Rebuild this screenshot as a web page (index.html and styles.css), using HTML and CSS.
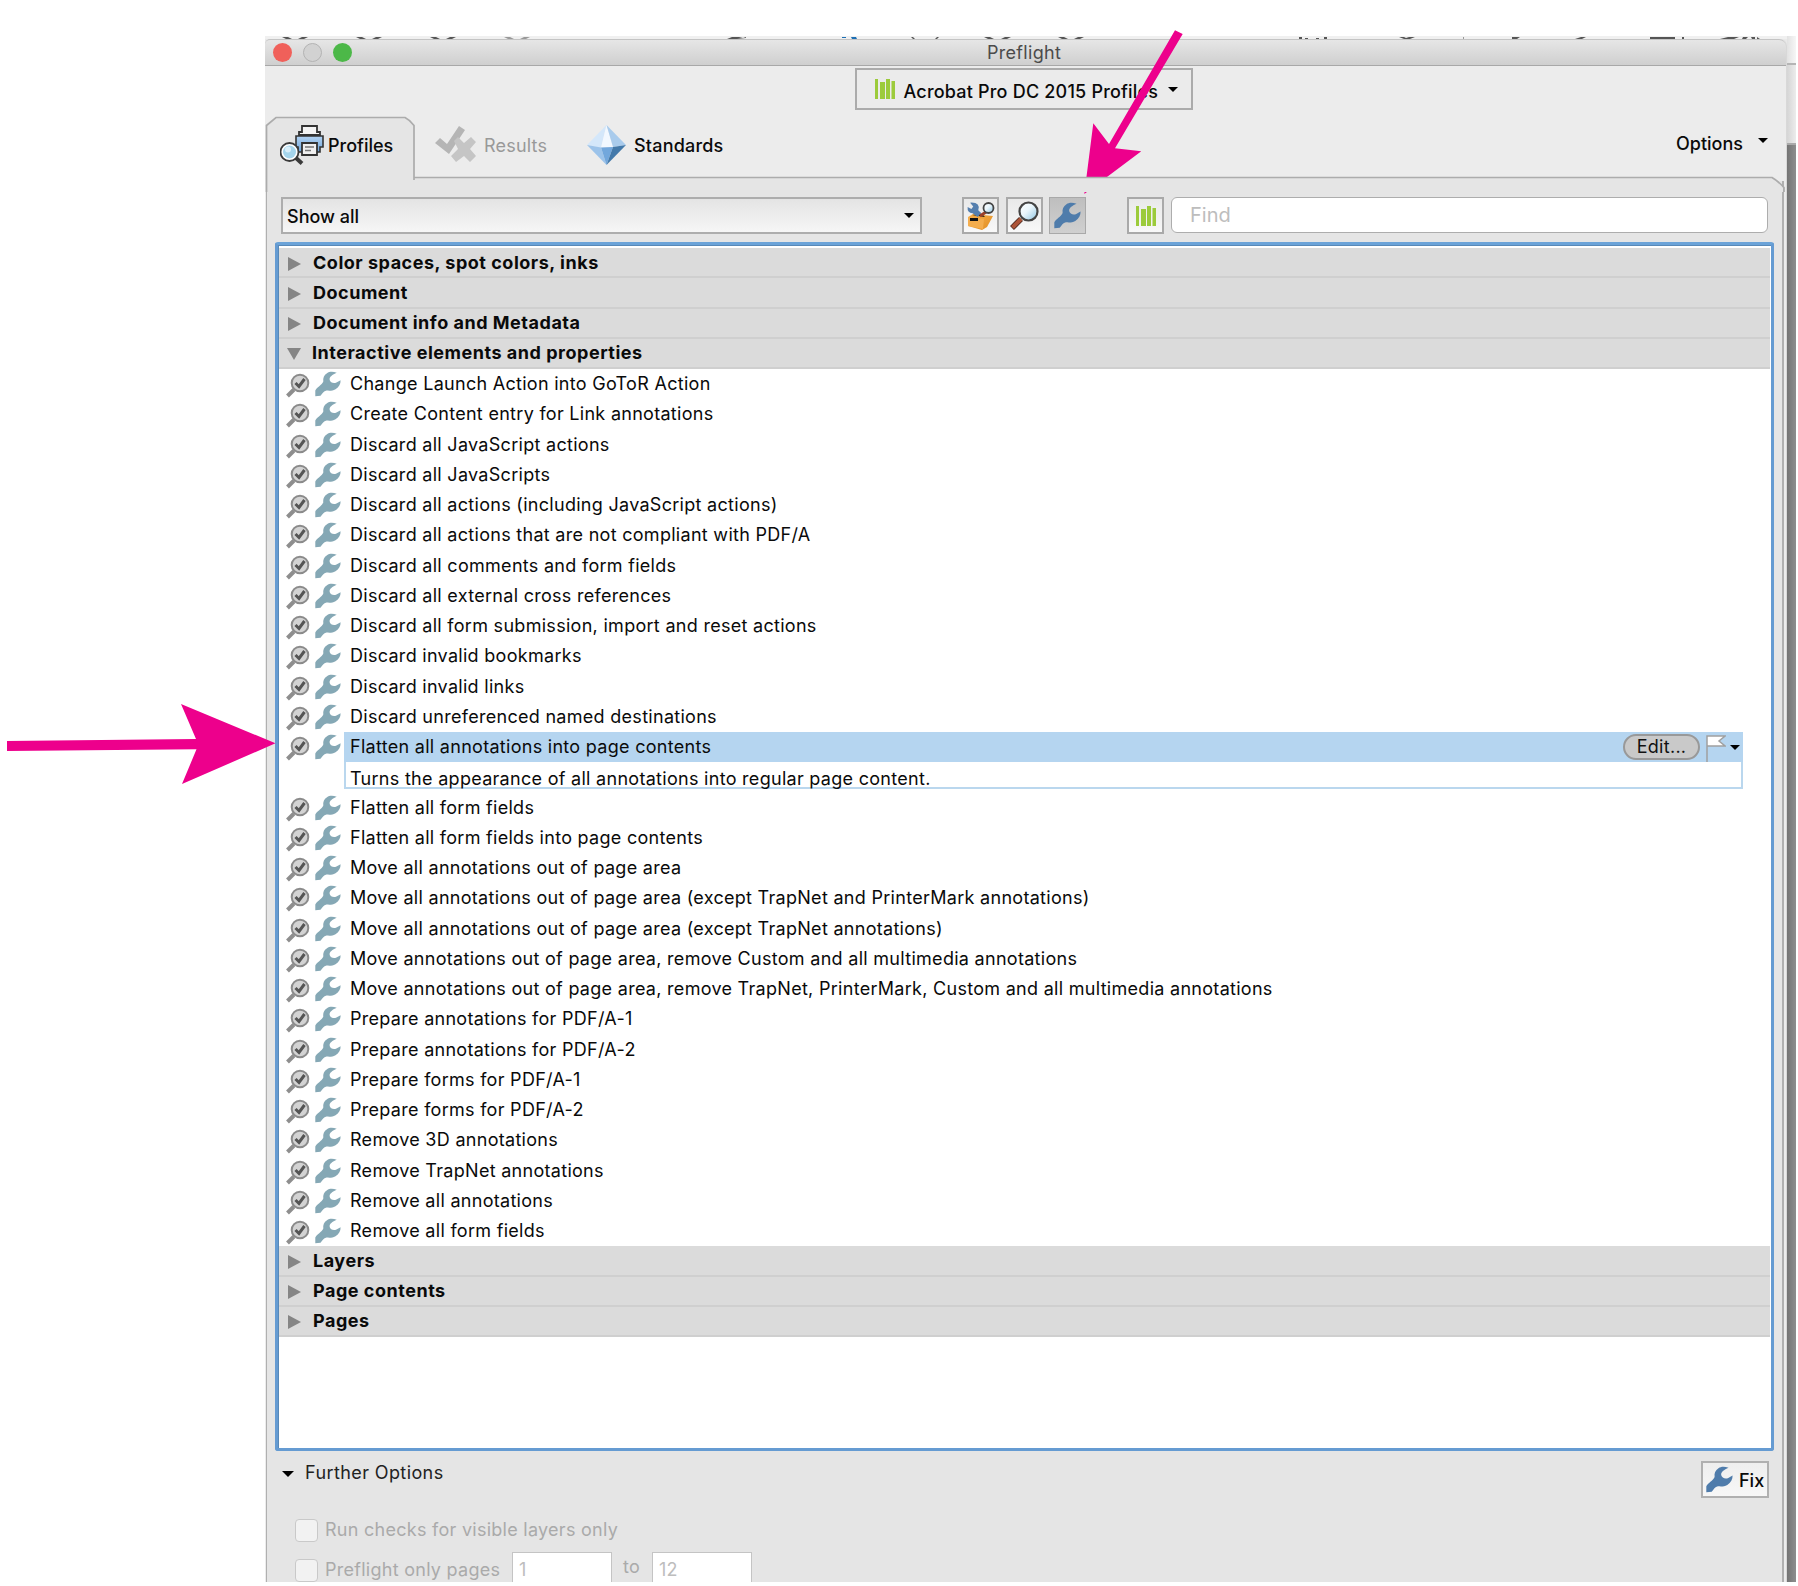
FILE: index.html
```html
<!DOCTYPE html>
<html lang="en">
<head>
<meta charset="utf-8">
<title>Preflight</title>
<link rel="stylesheet" href="styles.css">
</head>
<body>
<svg class="defs" aria-hidden="true">
  <defs>
    <symbol id="wrench" viewBox="0 0 26 26">
      <path d="M21.700 1.800 C18 .3 14.500 .3 12 2.200 C9 4 7.800 7 8.300 10.500 C7 14 1.500 16.500 .3 19.500 L.3 25.300 L5.500 24.800 C7.500 22.500 8.500 20.300 11.500 19.600 C14.500 19.800 17.500 20 20.500 18.200 C24 16 25.700 13 25.600 9.200 L21 11.800 C18 12.600 15.300 11.500 14.700 9 C14 6 17.500 3.700 21.700 1.800 Z"/>
    </symbol>
    <symbol id="loupe" viewBox="0 0 24 24">
      <path d="M1.500 22.500 L8 16" stroke="#8e8e8e" stroke-width="4"/>
      <circle cx="14" cy="9.500" r="8.300" fill="#d3d3d3" stroke="#8b8b8b" stroke-width="2"/>
      <path d="M9.500 9.500 L13 13 L18.500 5.500" fill="none" stroke="#555" stroke-width="3"/>
    </symbol>
    <symbol id="bars" viewBox="0 0 20 20">
      <path d="M0 0h3v20h-3zM5 3h5v17h-5zM11 0h4v20h-4zM16.500 2h3.500v18h-3.500z" fill="#9ccb3b"/>
    </symbol>
    <linearGradient id="lens" x1="0" y1="0" x2="1" y2="1"><stop offset="0" stop-color="#fff"/><stop offset=".45" stop-color="#eaf6fc"/><stop offset="1" stop-color="#8cc4e2"/></linearGradient>
    <linearGradient id="box" x1="0" y1="0" x2="1" y2="1"><stop offset="0" stop-color="#f8b04a"/><stop offset="1" stop-color="#e08d22"/></linearGradient>
    <linearGradient id="blue" x1="0" y1="0" x2="0" y2="1"><stop offset="0" stop-color="#b3d3f3"/><stop offset="1" stop-color="#6fa5da"/></linearGradient>
  </defs>
</svg>

<div class="desktop">
  <div class="main">
    <svg class="remnant" width="1522" height="3" viewBox="0 0 1522 3">
      <path d="M17 1h6l4 2h-6zM43 1h-6l-4 2h6zM91 1h6l4 2h-6zM117 1h-6l-4 2h6zM165 1h6l4 2h-6zM191 1h-6l-4 2h6zM462 3l5-2h7l4 1l3-1v1l-9 1h-10zM646 1h2l2 2h-2zM674 1h-2l-2 2h2zM719 1h6l4 2h-6zM746 1h-6l-4 2h6zM793 1h6l4 2h-6zM819 1h-6l-4 2h6zM1034 1h3v2h-3zM1059 1h3v2h-3zM1040 2h3v1h-3zM1051 2h3v1h-3zM1134 1h5l2 1l3-1h6l-5 2h-6zM1247 1h8l-3 2h-5zM1310 3l6-2h5l-4 2h-7zM1385 1h25v2h-25zM1417 1h2v2h-2zM1455 3l8-2h11l-5 2zM1478 1h5l-2 2h-4zM1486 1h4v2h-3zM1492 1l3 2h-3z" fill="#555"/>
      <path d="M239 1h6l4 2h-6zM265 1h-6l-4 2h6zM1198 1h1v2h-1z" fill="#999"/>
      <path d="M577 1h4v1h-4zM586 1h5l1 2h-5z" fill="#1d6fb4"/>
    </svg>
    <div class="window">
      <header class="titlebar">
        <span class="light red"></span><span class="light idle"></span><span class="light green"></span>
        <span class="title">Preflight</span>
      </header>
      <div class="library-row">
        <div class="library">
          <svg width="20" height="20"><use href="#bars"/></svg>
          <span class="library-name">Acrobat Pro DC 2015 Profiles</span>
          <i class="caret"></i>
        </div>
      </div>
      <nav class="tabs">
        <svg class="tab-shape" width="1522" height="76" viewBox="0 0 1522 76">
          <path d="M2 76V10Q8 5 11 1.500H140Q145 4 149 10V61.500H1507Q1513 65 1518 71.500V76Z" fill="#e5e5e5"/>
          <path d="M1.500 76V9.500Q8 4 11 1.500H140Q145 4 149 9.500V64M149 61.500H1507Q1513 65 1519 71.500V76" fill="none" stroke="#acacac" stroke-width="1.700"/>
        </svg>
        <div class="tab profiles">
          <svg width="44" height="40" viewBox="0 0 44 40">
            <path d="M16 11h27v11h-3v5h-22v-5h-2z" fill="url(#blue)" stroke="#333" stroke-width="1.600"/>
            <path d="M22 1h15v6h3v3h-21v-3h3z" fill="#f4f4f4" stroke="#333" stroke-width="1.800"/>
            <path d="M22 18h15v12h-15z" fill="#f0f0f0" stroke="#333" stroke-width="1.800"/>
            <path d="M25 22h9M25 25.500h6" stroke="#777" stroke-width="1.300"/>
            <path d="M16 33l6 5.500" stroke="#3a3a3a" stroke-width="4"/>
            <circle cx="9.500" cy="27" r="9" fill="#fff" stroke="#3a3a3a" stroke-width="1.800"/>
            <circle cx="9.500" cy="27" r="6.500" fill="#a5d5ec"/><circle cx="8" cy="24.500" r="3" fill="#d9effa"/>
          </svg>
          <span>Profiles</span>
        </div>
        <div class="tab results">
          <svg width="42" height="40" viewBox="0 0 42 40">
            <path d="M0 18l5-5 7 6L24 1l6 4L14 29z" fill="#b5b5b5"/>
            <path d="M19 16l4-4 6 6 7-6 5 5-6 7 6 7-6 6-6-6-8 6-5-6 7-7z" fill="#c5c5c5"/>
          </svg>
          <span>Results</span>
        </div>
        <div class="tab standards">
          <svg width="41" height="40" viewBox="0 0 41 40">
            <path d="M20.500 0L1 20l14 3z" fill="#d4e7fa"/><path d="M20.500 0L15 23l12-1z" fill="#f2f8ff"/><path d="M20.500 0L27 22l13-2z" fill="#a9cbec"/>
            <path d="M1 20l14 2.500L20.500 40z" fill="#9cc3ea"/><path d="M15 22.500l12-.5-6.500 18z" fill="#72a7dc"/><path d="M27 22l13-2-19.500 20z" fill="#4379aa"/>
          </svg>
          <span>Standards</span>
        </div>
        <div class="options"><span>Options</span><i class="caret"></i></div>
      </nav>

      <section class="panel">
        <div class="toolbar">
          <div class="select"><span>Show all</span><i class="caret"></i></div>
          <div class="tool first">
            <svg width="29" height="29" viewBox="0 0 29 29">
              <path d="M2 16l5-3 20 2-6 11-5 3-14-4z" fill="url(#box)"/><path d="M2 16l16 2-1 10-15-3z" fill="#f4ad4d"/>
              <path d="M4 17h8v3H4zM6 14l10-1 3 3" fill="#111"/>
              <svg x="1" y="1" width="15" height="15" viewBox="0 0 24 24"><path d="M5 1L10 7L7 11L1 8Q0 17 9 18L17 24L23 18L18 13Q22 0 5 1Z" fill="#557fae"/></svg>
              <path d="M20 11l-6 4" stroke="#9b3f28" stroke-width="3"/><circle cx="22.500" cy="7" r="5" fill="url(#lens)" stroke="#444" stroke-width="1.800"/>
            </svg>
          </div>
          <div class="tool">
            <svg width="29" height="29" viewBox="0 0 29 29">
              <path d="M2 27l9-9" stroke="#4b2921" stroke-width="5.500"/><path d="M2.500 26.500l8.500-8.500" stroke="#ad5438" stroke-width="4"/>
              <circle cx="18.500" cy="10.500" r="9" fill="url(#lens)" stroke="#444" stroke-width="2.200"/>
            </svg>
          </div>
          <div class="tool pressed"><svg class="wrench-blue" width="27" height="27"><use href="#wrench"/></svg></div>
          <div class="tool library-tool"><svg width="20" height="20"><use href="#bars"/></svg></div>
          <div class="find">Find</div>
        </div>

        <div class="list">
          <div class="group"><i class="closed"></i>Color spaces, spot colors, inks</div>
          <div class="group"><i class="closed"></i>Document</div>
          <div class="group"><i class="closed"></i>Document info and Metadata</div>
          <div class="group"><i class="open"></i>Interactive elements and properties</div>
          <div class="item"><svg class="lp"><use href="#loupe"/></svg><svg class="wr"><use href="#wrench"/></svg><span>Change Launch Action into GoToR Action</span></div>
          <div class="item"><svg class="lp"><use href="#loupe"/></svg><svg class="wr"><use href="#wrench"/></svg><span>Create Content entry for Link annotations</span></div>
          <div class="item"><svg class="lp"><use href="#loupe"/></svg><svg class="wr"><use href="#wrench"/></svg><span>Discard all JavaScript actions</span></div>
          <div class="item"><svg class="lp"><use href="#loupe"/></svg><svg class="wr"><use href="#wrench"/></svg><span>Discard all JavaScripts</span></div>
          <div class="item"><svg class="lp"><use href="#loupe"/></svg><svg class="wr"><use href="#wrench"/></svg><span>Discard all actions (including JavaScript actions)</span></div>
          <div class="item"><svg class="lp"><use href="#loupe"/></svg><svg class="wr"><use href="#wrench"/></svg><span>Discard all actions that are not compliant with PDF/A</span></div>
          <div class="item"><svg class="lp"><use href="#loupe"/></svg><svg class="wr"><use href="#wrench"/></svg><span>Discard all comments and form fields</span></div>
          <div class="item"><svg class="lp"><use href="#loupe"/></svg><svg class="wr"><use href="#wrench"/></svg><span>Discard all external cross references</span></div>
          <div class="item"><svg class="lp"><use href="#loupe"/></svg><svg class="wr"><use href="#wrench"/></svg><span>Discard all form submission, import and reset actions</span></div>
          <div class="item"><svg class="lp"><use href="#loupe"/></svg><svg class="wr"><use href="#wrench"/></svg><span>Discard invalid bookmarks</span></div>
          <div class="item"><svg class="lp"><use href="#loupe"/></svg><svg class="wr"><use href="#wrench"/></svg><span>Discard invalid links</span></div>
          <div class="item"><svg class="lp"><use href="#loupe"/></svg><svg class="wr"><use href="#wrench"/></svg><span>Discard unreferenced named destinations</span></div>
          <div class="item selected"><svg class="lp"><use href="#loupe"/></svg><svg class="wr"><use href="#wrench"/></svg>
            <div class="detail">
              <div class="detail-head">
                <span>Flatten all annotations into page contents</span>
                <button class="edit">Edit...</button>
                <svg width="20" height="27" viewBox="0 0 20 27"><path d="M1 27V1H19L13 6L19 11H1" fill="#fff" stroke="#a0a0a0" stroke-width="1.500"/></svg>
                <i class="caret"></i>
              </div>
              <div class="detail-body">Turns the appearance of all annotations into regular page content.</div>
            </div>
          </div>
          <div class="item"><svg class="lp"><use href="#loupe"/></svg><svg class="wr"><use href="#wrench"/></svg><span>Flatten all form fields</span></div>
          <div class="item"><svg class="lp"><use href="#loupe"/></svg><svg class="wr"><use href="#wrench"/></svg><span>Flatten all form fields into page contents</span></div>
          <div class="item"><svg class="lp"><use href="#loupe"/></svg><svg class="wr"><use href="#wrench"/></svg><span>Move all annotations out of page area</span></div>
          <div class="item"><svg class="lp"><use href="#loupe"/></svg><svg class="wr"><use href="#wrench"/></svg><span>Move all annotations out of page area (except TrapNet and PrinterMark annotations)</span></div>
          <div class="item"><svg class="lp"><use href="#loupe"/></svg><svg class="wr"><use href="#wrench"/></svg><span>Move all annotations out of page area (except TrapNet annotations)</span></div>
          <div class="item"><svg class="lp"><use href="#loupe"/></svg><svg class="wr"><use href="#wrench"/></svg><span>Move annotations out of page area, remove Custom and all multimedia annotations</span></div>
          <div class="item"><svg class="lp"><use href="#loupe"/></svg><svg class="wr"><use href="#wrench"/></svg><span>Move annotations out of page area, remove TrapNet, PrinterMark, Custom and all multimedia annotations</span></div>
          <div class="item"><svg class="lp"><use href="#loupe"/></svg><svg class="wr"><use href="#wrench"/></svg><span>Prepare annotations for PDF/A-1</span></div>
          <div class="item"><svg class="lp"><use href="#loupe"/></svg><svg class="wr"><use href="#wrench"/></svg><span>Prepare annotations for PDF/A-2</span></div>
          <div class="item"><svg class="lp"><use href="#loupe"/></svg><svg class="wr"><use href="#wrench"/></svg><span>Prepare forms for PDF/A-1</span></div>
          <div class="item"><svg class="lp"><use href="#loupe"/></svg><svg class="wr"><use href="#wrench"/></svg><span>Prepare forms for PDF/A-2</span></div>
          <div class="item"><svg class="lp"><use href="#loupe"/></svg><svg class="wr"><use href="#wrench"/></svg><span>Remove 3D annotations</span></div>
          <div class="item"><svg class="lp"><use href="#loupe"/></svg><svg class="wr"><use href="#wrench"/></svg><span>Remove TrapNet annotations</span></div>
          <div class="item"><svg class="lp"><use href="#loupe"/></svg><svg class="wr"><use href="#wrench"/></svg><span>Remove all annotations</span></div>
          <div class="item"><svg class="lp"><use href="#loupe"/></svg><svg class="wr"><use href="#wrench"/></svg><span>Remove all form fields</span></div>
          <div class="group"><i class="closed"></i>Layers</div>
          <div class="group"><i class="closed"></i>Page contents</div>
          <div class="group"><i class="closed"></i>Pages</div>
        </div>

        <footer class="footer">
          <div class="further">
            <div class="further-head"><i class="caret"></i><span>Further Options</span></div>
            <div class="check"><i class="checkbox"></i><span>Run checks for visible layers only</span></div>
            <div class="check pages"><i class="checkbox"></i><span class="pages-label">Preflight only pages</span><div class="num">1</div><span class="to">to</span><div class="num">12</div></div>
          </div>
          <div class="fix"><svg class="wrench-blue" width="27" height="27"><use href="#wrench"/></svg><span>Fix</span></div>
        </footer>
      </section>
    </div>
  </div>
  <div class="behind"><div class="behind-bar"></div><div class="behind-pane"></div><div class="behind-canvas"></div></div>
</div>

<svg class="pointers" width="1798" height="1586" viewBox="0 0 1798 1586">
  <path d="M7 741L196 739L181 704L275.500 743.300L182 784L196.500 749.300L7 751Z"/>
  <path d="M1175 30.300L1182.700 34L1115 148.300L1141.300 151.300L1084.300 194L1093.300 123.300L1109 144Z"/>
</svg>
</body>
</html>
```
FILE: styles.css
```css
* { box-sizing: border-box; }
body {
  margin: 0;
  width: 1798px;
  height: 1586px;
  overflow: hidden;
  position: relative;
  background: #fff;
  color: #0a0a0a;
  font: 500 18px/22px Inter, "Liberation Sans", sans-serif;
}
svg { display: block; flex: none; }
.defs { position: absolute; width: 0; height: 0; }
.desktop { display: flex; padding: 36px 2px 4px 265px; height: 1586px; }
.main { width: 1522px; height: 1546px; display: flex; flex-direction: column; background: #e9e9e9; overflow: hidden; }
.remnant { background: #f0f0f0; }
.window { flex: 1; min-height: 0; display: flex; flex-direction: column; background: #ececec; border-right: 1px solid #d8d8d8; border-radius: 5px 7px 0 0; }
.titlebar { height: 27px; display: flex; align-items: center; padding-left: 8px; gap: 11px; background: linear-gradient(#e6e6e6, #cfcfcf); border-top: 1px solid #c4c4c4; border-bottom: 1px solid #a8a8a8; border-radius: 5px 7px 0 0; }
.light { width: 19px; height: 19px; border-radius: 50%; }
.red { background: #f0605a; }
.idle { background: #d2d2d2; border: 1px solid #b3b3b3; }
.green { background: #4cb848; }
.title { margin-left: 624px; color: #4b4b4b; font-weight: 400; letter-spacing: .3px; }
.library-row { height: 50px; padding-top: 2px; display: flex; justify-content: center; }
.library { width: 338px; height: 42px; margin-right: 4px; border: 2px solid #ababab; display: flex; align-items: center; padding-left: 18px; background: #ebebeb; }
.library-name { width: 256px; margin: 5px 8px 0 9px; white-space: nowrap; letter-spacing: .2px; }
.caret { width: 0; height: 0; border: 5px solid transparent; border-top: 5px solid #000; border-bottom: 0; flex: none; }
.tabs { height: 66px; position: relative; display: flex; align-items: flex-start; }
.tab-shape { position: absolute; left: 0; top: 0; z-index: 1; clip-path: inset(0); }
.tab { position: relative; z-index: 2; display: flex; height: 40px; margin-top: 9px; align-items: center; }
.tab span { padding-top: 1px; }
.profiles { margin-left: 15px; width: 155px; gap: 4px; }
.results { width: 151px; gap: 7px; color: #999; font-weight: 400; letter-spacing: .2px; }
.standards { gap: 7px; letter-spacing: .2px; }
.options { position: relative; z-index: 2; margin: 17px 18px 0 auto; display: flex; gap: 15px; }
.options .caret { margin-top: 5px; }
.panel { position: relative; flex: 1; min-height: 0; margin: -1px 2px 0 1px; background: #e5e5e5; border: solid #b0b0b0; border-width: 0 2px 0 1px; padding: 16px 10px 0 8px; overflow: hidden; }
.toolbar { display: flex; align-items: flex-start; padding-left: 6px; height: 45px; }
.select { width: 641px; height: 37px; border: 2px solid #adadad; background: linear-gradient(#e4e4e4, #f6f6f6); display: flex; align-items: center; justify-content: space-between; padding: 0 6px 0 4px; }
.select span { padding-top: 2px; }
.tool { width: 37px; height: 37px; border: 2px solid #a9a9a9; background: linear-gradient(#e9e9e9, #f8f8f8); display: flex; align-items: center; justify-content: center; margin-right: 7px; }
.first { margin-left: 40px; }
.pressed { background: linear-gradient(#bebebe, #d0d0d0); border-width: 1px; margin: 0 41px 0 -1px; }
.wrench-blue { fill: #4f7cab; }
.find { width: 597px; height: 36px; border: 1px solid #adadad; border-radius: 6px; background: #fff; color: #bdbdbd; font-size: 20px; font-weight: 400; line-height: 35px; padding-left: 18px; }
.list { width: 1499px; height: 1209px; border: 3px solid #659bd2; border-top-color: #6ba3d8; border-radius: 3px; background: #fff; padding: 3px 1px 0; box-shadow: inset 0 1px #5889b8, inset 1px 0 #5889b8; }
.group { height: 30.25px; display: flex; align-items: center; font-weight: 700; background: #dbdbdb; border-bottom: 2px solid #cfcfcf; letter-spacing: .52px; padding: 1px 0 0 8px; }
.group i { width: 0; height: 0; }
.closed { border: 7px solid transparent; border-left: 13px solid #858585; border-right: 0; margin: 2px 12px 0 1px; }
.open { border: 7.500px solid transparent; border-top: 12px solid #858585; border-bottom: 0; margin: 1px 11px 0 0; }
.item { height: 30.25px; display: flex; align-items: center; padding-left: 7px; white-space: nowrap; font-weight: 400; letter-spacing: .29px; }
.lp { width: 24px; height: 25px; margin: 3px 5px 0 0; }
.wr { width: 26px; height: 26px; fill: #85a8b5; margin-right: 9px; }
.selected { height: 60.500px; align-items: flex-start; }
.selected .lp { margin-top: 4px; }
.selected .wr { margin: 2px 3px 0 0; }
.detail { width: 1399px; height: 57px; border: 2px solid #bad7ee; border-top: 0; }
.detail-head { height: 30px; margin: 0 -2px; padding: 0 3px 0 6px; background: #b5d5f0; display: flex; align-items: center; }
.edit { margin: 0 6px 0 auto; width: 77px; height: 26px; padding: 0; border: 2px solid #999; border-radius: 13px; background: #c9c9c9; color: #111; font: inherit; line-height: 20px; letter-spacing: inherit; }
.detail-head svg { margin: 3px 4px 0 0; }
.detail-body { padding: 5px 0 0 4px; line-height: 24px; }
.footer { display: flex; justify-content: space-between; padding: 9px 3px 0 6px; }
.further { color: #aaa; font-weight: 400; letter-spacing: .27px; }
.further-head { display: flex; align-items: center; height: 26px; color: #222; gap: 11px; letter-spacing: .4px; }
.further-head .caret { border-width: 6px 6px 0; margin-top: 2px; margin-left: 1px; }
.check { display: flex; align-items: center; height: 24px; margin: 32px 0 0 14px; }
.checkbox { width: 23px; height: 23px; border: 1px solid #c9c9c9; border-radius: 4px; background: #f2f2f2; margin-right: 7px; flex: none; }
.pages { height: 36px; margin-top: 9px; }
.pages .checkbox { margin-top: 2px; }
.pages-label { width: 187px; padding-top: 2px; }
.num { width: 100px; height: 36px; border: 1px solid #c4c4c4; background: #fff; padding: 6px 0 0 6px; margin-top: 1px; color: #bdbdbd; }
.to { width: 40px; padding-left: 11px; margin-top: -4px; }
.fix { width: 68px; height: 37px; margin-top: 1px; border: 2px solid #b0b0b0; background: linear-gradient(#eee, #f7f7f7); display: flex; align-items: center; padding-left: 3px; gap: 6px; }
.fix span { padding-top: 2px; }
.behind { width: 9px; display: flex; flex-direction: column; }
.behind-bar { height: 29px; background: linear-gradient(90deg, #e2e2e2, #f6f6f6); border-bottom: 2px solid #b5b5b5; }
.behind-pane { height: 80px; background: linear-gradient(90deg, #d5d5d5, #ececec); border-bottom: 2px solid #aaa; }
.behind-canvas { flex: 1; background: linear-gradient(90deg, #747474, #8e8e8e); }
.pointers { position: absolute; left: 0; top: 0; fill: #ed008c; }
```
